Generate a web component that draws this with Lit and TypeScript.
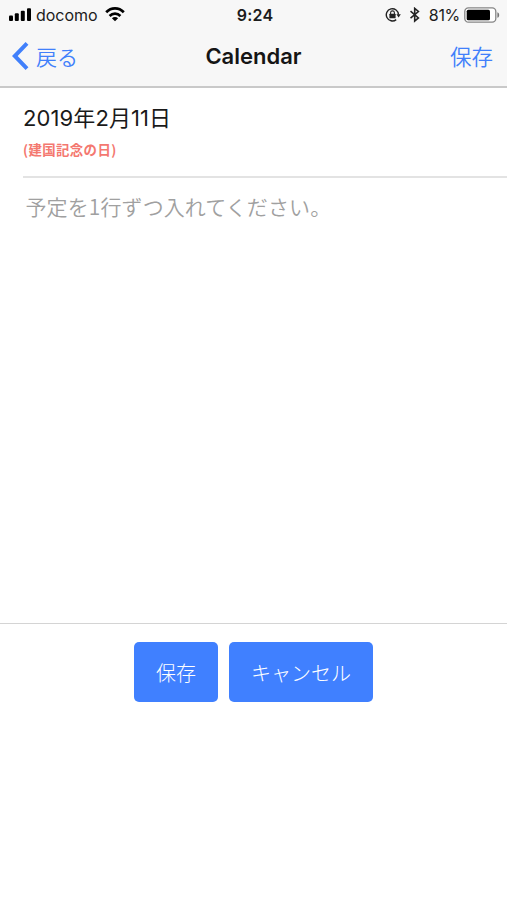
import { LitElement, html, css } from "lit";
import { customElement } from "lit/decorators.js";

@customElement("status-bar")
class StatusBar extends LitElement {
  static styles = css`
    :host { display: grid; grid-template-columns: 1fr auto 1fr; align-items: center; height: 30px; padding: 0 7px 0 9px;
      box-sizing: border-box; font: 16px/30px Inter, "Noto Sans CJK JP", sans-serif; color: #1c1c1c; }
    .side { display: flex; align-items: center; height: 30px; }
    .left { margin-left: -1px; }
    .right { justify-content: flex-end; }
    .carrier { margin: 0 8px 0 4px; font-size: 16px; letter-spacing: -0.05px; }
    .time { font-weight: 600; font-size: 16px; letter-spacing: 0.2px; margin-left: 1px; }
    .percent { margin: 0 4px 0 9px; letter-spacing: -0.3px; }
    .bt { margin-left: 8.5px; }
    svg { display: block; flex: none; }
  `;
  render() {
    return html`
      <div class="side left">
        <svg width="24" height="15" viewBox="0 0 24 15" fill="#000">
          <rect x="1" y="7.6" width="4" height="5.4" rx="1" /><rect x="6.8" y="5.3" width="4" height="7.7" rx="1" />
          <rect x="12.8" y="2.8" width="4" height="10.2" rx="1" /><rect x="19" y=".3" width="4" height="12.7" rx="1" />
        </svg>
        <span class="carrier">docomo</span>
        <svg width="20" height="16" viewBox="0 0 20 16" fill="none" stroke="#000" stroke-width="2.7">
          <path d="M1.2 5.2C6.2 .1 13.8 .1 18.8 5.2" /><path d="M4.6 9C7.7 5.9 12.3 5.9 15.4 9" />
          <path d="M10 14.2 6.9 11.2C8.5 9.6 11.5 9.6 13.1 11.2Z" fill="#000" stroke="none" />
        </svg>
      </div>
      <span class="time">9:24</span>
      <div class="side right">
        <svg width="16" height="16" viewBox="0 0 16 16" fill="none" stroke="#222" stroke-width="1.4">
          <path d="M13.5 7.6A6.1 6.1 0 1 0 11.2 12.6" /><path d="M11.4 7.2h4.4l-2.2 3.2Z" fill="#222" stroke="none" />
          <rect x="4.4" y="6.8" width="6.2" height="4.4" rx=".5" fill="#222" stroke="none" />
          <path d="M5.6 7.2V5.8a1.9 1.9 0 0 1 3.8 0V7.2" stroke-width="1.1" />
        </svg>
        <svg class="bt" width="10" height="16" viewBox="0 0 10 16" fill="none" stroke="#222" stroke-width="1.6">
          <path d="M.5 4.2 8.4 10.9 4.7 14V1.4L8.4 4.5.5 11.2" />
        </svg>
        <span class="percent">81%</span>
        <svg width="36" height="16" viewBox="0 0 36 16">
          <rect x=".8" y=".8" width="31" height="14.4" rx="3.6" fill="#fff" stroke="#858585" stroke-width="1.3" />
          <rect x="2.7" y="2.7" width="23.3" height="10.6" rx="1.6" fill="#000" />
          <path d="M33.4 5.2c2.4.7 2.4 4.9 0 5.6Z" fill="#777" />
        </svg>
      </div>`;
  }
}

@customElement("app-root")
class AppRoot extends LitElement {
  static styles = css`
    :host { display: flex; flex-direction: column; height: 900px; background: #fff; box-sizing: border-box; overflow: hidden;
      font-family: Inter, "Noto Sans CJK JP", sans-serif; color: #1a1a1a; }
    .header { height: 88px; box-sizing: border-box; background: #f7f7f7; border-bottom: 2px solid #c9c9c9; }
    .nav { display: grid; grid-template-columns: 1fr auto 1fr; align-items: center; height: 52px; padding: 0 14px 0 12px; }
    .back, .save { font: 21px/30px "Noto Sans CJK JP", sans-serif; font-weight: 350; color: #4180fb; }
    .back { display: flex; align-items: center; gap: 7px; margin-left: -1px; }
    .save { text-align: right; font-size: 21.5px; }
    .title { font-size: 22px; font-weight: 600; line-height: 30px; letter-spacing: 0; color: #151515; margin: 0 -1px 0 1px; }
    .date { margin-left: 23px; height: 90px; box-sizing: border-box; border-bottom: 2px solid #e3e3e3; padding-top: 15px; }
    .day { font-size: 22px; line-height: 30px; letter-spacing: 0.1px; }
    .holiday { font: 700 13.4px/20px "Noto Sans CJK JP", sans-serif; letter-spacing: 0.4px; color: #f47870; margin-top: 6px; }
    .entry { height: 446px; box-sizing: border-box; border-bottom: 1px solid #d4d4d4; padding: 13px 25.5px;
      font: 21px/30px "Noto Sans CJK JP", sans-serif; font-weight: 350; letter-spacing: 0.1px; color: #a0a0a0; }
    .actions { display: flex; justify-content: center; gap: 11px; padding-top: 18px; }
    .button { height: 60px; border-radius: 5px; background: #4080ff; color: #fff; display: flex; align-items: center;
      justify-content: center; font: 20px/30px "Noto Sans CJK JP", sans-serif; font-weight: 300; box-sizing: border-box; padding-top: 2px; }
    .short { width: 84px; } .long { width: 144px; }
  `;
  render() {
    return html`
      <div class="header">
        <status-bar></status-bar>
        <div class="nav">
          <div class="back">
            <svg width="18" height="30" viewBox="0 0 18 30" fill="none" stroke="#4180fb" stroke-width="4">
              <path d="M16 2.4 3.8 15 16 27.6" />
            </svg>
            <span>戻る</span>
          </div>
          <span class="title">Calendar</span>
          <span class="save">保存</span>
        </div>
      </div>
      <div class="date">
        <div class="day">2019年2月11日</div>
        <div class="holiday">(建国記念の日)</div>
      </div>
      <div class="entry">予定を1行ずつ入れてください。</div>
      <div class="actions">
        <div class="button short">保存</div>
        <div class="button long">キャンセル</div>
      </div>`;
  }
}
